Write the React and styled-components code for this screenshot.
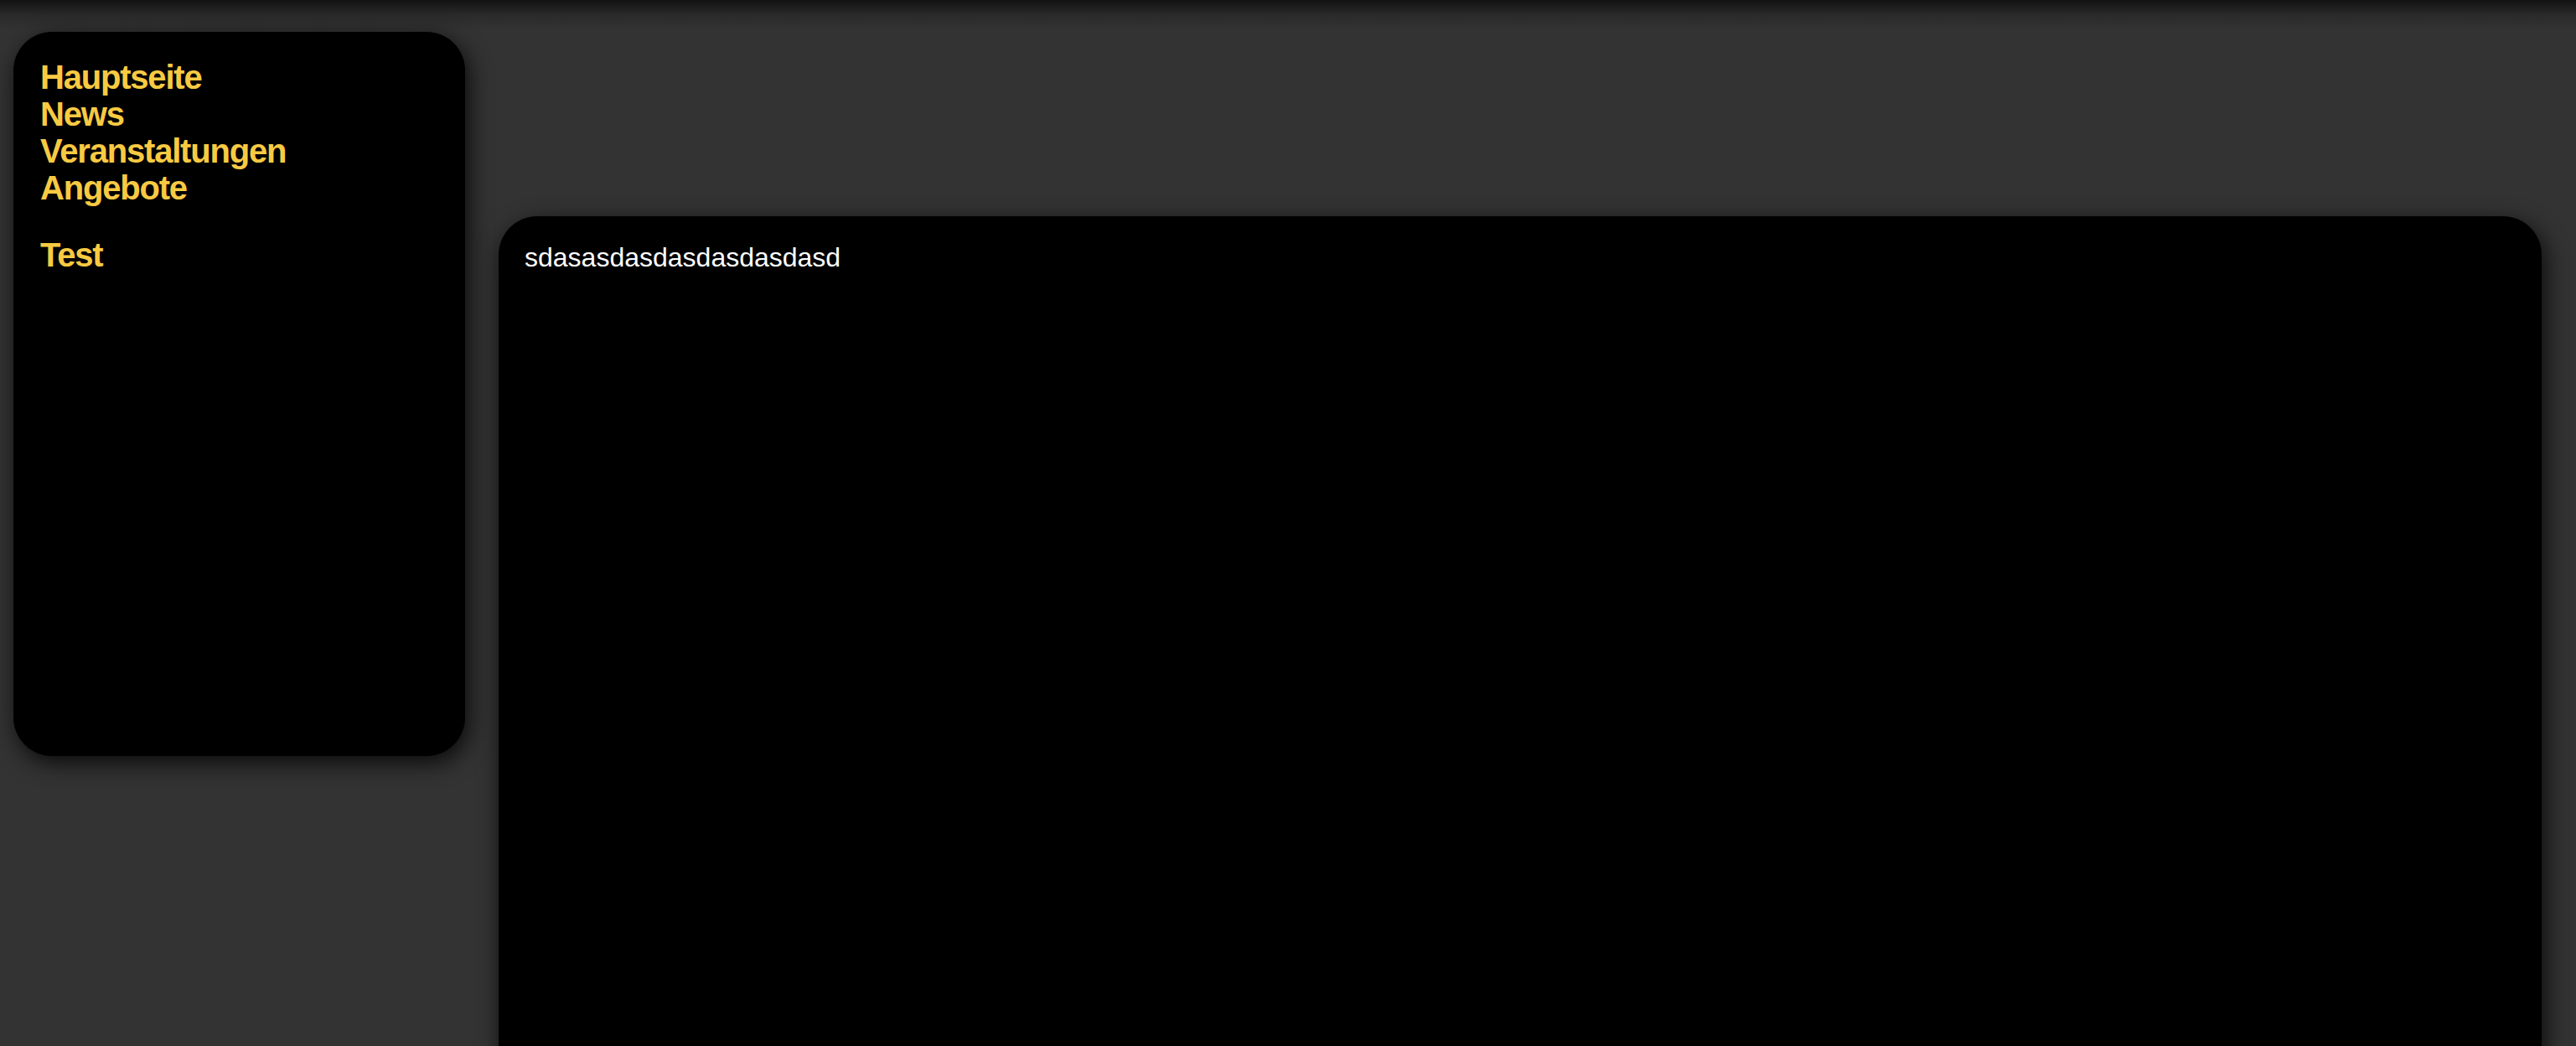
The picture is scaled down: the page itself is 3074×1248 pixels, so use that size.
import React from 'react';
import styled, { createGlobalStyle } from 'styled-components';

const GlobalStyle = createGlobalStyle`
  html, body {
    margin: 0;
    padding: 0;
  }
  body {
    min-height: 100vh;
    background: linear-gradient(to bottom, #121212 0, #2a2a2a 18px, #333333 36px) no-repeat, #333333;
    font-family: "Liberation Sans", Arial, sans-serif;
    overflow: hidden;
  }
`;

const Page = styled.div`
  display: flex;
  align-items: flex-start;
  gap: 40px;
  padding: 38px 41px 0 16px;
`;

const Sidebar = styled.nav`
  flex: 0 0 539px;
  height: 864px;
  box-sizing: border-box;
  padding: 32px;
  background: #000;
  border-radius: 46px;
  box-shadow: 4px 8px 28px rgba(0, 0, 0, 0.8);
  display: flex;
  flex-direction: column;
`;

const NavGroup = styled.ul`
  list-style: none;
  margin: 0 0 ${(p) => (p.$last ? 0 : 36)}px;
  padding: 0;
`;

const NavLink = styled.a`
  display: block;
  color: #f8ca42;
  font-family: "Liberation Sans", Arial, sans-serif;
  font-weight: 700;
  font-size: 40px;
  line-height: 44px;
  letter-spacing: -1.2px;
  text-decoration: none;
  cursor: pointer;
`;

const Content = styled.main`
  flex: 1;
  margin-top: 220px;
  min-height: 1100px;
  box-sizing: border-box;
  padding: 31px;
  background: #000;
  border-radius: 46px;
  box-shadow: 4px 8px 28px rgba(0, 0, 0, 0.8);
  color: #fff;
  font-size: 32px;
`;

const mainLinks = ['Hauptseite', 'News', 'Veranstaltungen', 'Angebote'];
const extraLinks = ['Test'];

export default function App() {
  return (
    <>
      <GlobalStyle />
      <Page>
        <Sidebar>
          <NavGroup>
            {mainLinks.map((label) => (
              <li key={label}>
                <NavLink>{label}</NavLink>
              </li>
            ))}
          </NavGroup>
          <NavGroup $last>
            {extraLinks.map((label) => (
              <li key={label}>
                <NavLink>{label}</NavLink>
              </li>
            ))}
          </NavGroup>
        </Sidebar>
        <Content>sdasasdasdasdasdasdasd</Content>
      </Page>
    </>
  );
}
